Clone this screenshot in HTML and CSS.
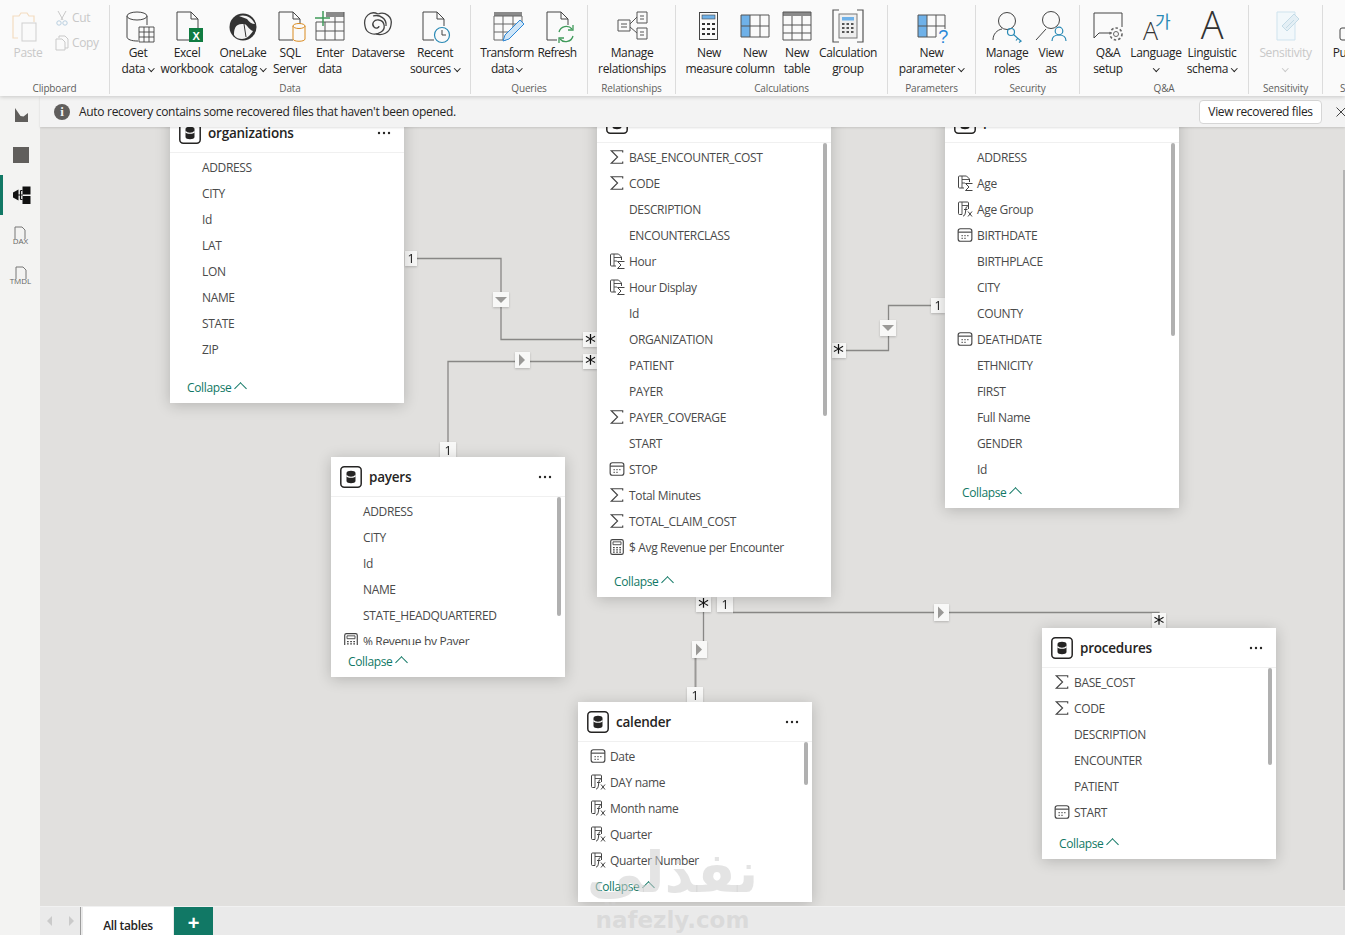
FILE: index.html
```html
<!DOCTYPE html>
<html lang="en">
<head>
    <meta charset="UTF-8">
    <title>Model view</title>
    <link rel="stylesheet" href="styles.css">
</head>
<body>
    <svg class="defs" width="0" height="0">
        <symbol id="i-sum" viewBox="0 0 14 14"><path d="M12 3V1.500H2L7.500 7 2 12.500h10V11" fill="none" stroke="#444" stroke-width="1"/></symbol>
        <symbol id="i-cal" viewBox="0 0 14 14"><rect x="1" y="1.500" width="12" height="11" rx="2" fill="none" stroke="#444"/><path d="M1 4.500h12" stroke="#444"/><path d="M4 7.500h1M6.500 7.500h1M9 7.500h1M4 10h1M6.500 10h1" stroke="#444"/></symbol>
        <symbol id="i-calc" viewBox="0 0 16 16"><path d="M7 13H2.500a1 1 0 0 1-1-1V2a1 1 0 0 1 1-1h7l3 3v3" fill="none" stroke="#444"/><path d="M5 1v12M5 4.500h7M5 8h3" stroke="#444" stroke-width=".9"/><path d="M15.500 8.500H8.500l3.500 3.500-3.500 3.500h7" fill="none" stroke="#444"/></symbol>
        <symbol id="i-fx" viewBox="0 0 16 16"><path d="M5 13.500H2.500a1 1 0 0 1-1-1V2a1 1 0 0 1 1-1h8a1 1 0 0 1 1 1v6" fill="none" stroke="#444"/><path d="M5 1v12.500M5 4.500h6" stroke="#444" stroke-width=".9"/><path d="M10.500 5.500C8.500 5.500 9 8 8.500 11s-1 4-2.500 4" fill="none" stroke="#444"/><path d="M7 8.500h3.500M11 10.500l4 5M15 10.500l-4 5" stroke="#444"/></symbol>
        <symbol id="i-meas" viewBox="0 0 14 14"><rect x="1.500" y=".5" width="11" height="13" rx="1.500" fill="none" stroke="#444"/><path d="M3.500 2.500h7v2.500h-7z" fill="none" stroke="#444" stroke-width=".8"/><path d="M3.500 7.500h1.500M6.300 7.500h1.500M9 7.500h1.500M3.500 9.500h1.500M6.300 9.500h1.500M9 9.500h1.500M3.500 11.500h1.500M6.300 11.500h1.500M9 11.500h1.500" stroke="#444"/></symbol>
        <symbol id="i-db" viewBox="0 0 22 22"><rect x=".8" y=".8" width="20.400" height="20.400" rx="3.500" fill="#fff" stroke="#252423" stroke-width="1.500"/><path d="M6.500 7c0-3 9-3 9 0v8c0 3-9 3-9 0z" fill="#252423"/><path d="M6.500 9.500c1 2.300 8 2.300 9 0" fill="none" stroke="#fff" stroke-width="1.200"/></symbol>
        <symbol id="i-more" viewBox="0 0 14 4"><circle cx="2" cy="2" r="1.200" fill="#252423"/><circle cx="7" cy="2" r="1.200" fill="#252423"/><circle cx="12" cy="2" r="1.200" fill="#252423"/></symbol>
    </svg>

    <div class="app">
        <header class="ribbon">
            <section class="group group-clipboard">
                <div class="group-btns">
                    <div class="btn w40 off">
                        <svg class="ico" viewBox="0 0 36 36"><path d="M8 30H3V8h6l2-3h6l2 3h5v6" fill="none" stroke="#f3dcc0" stroke-width="1.200"/><rect x="12" y="15" width="14" height="18" fill="#fafafa" stroke="#cfcfcf"/></svg>
                        <span class="btn-text">Paste</span>
                    </div>
                    <div class="clip-stack">
                        <div class="clip-item off">
                            <svg class="ico-small" viewBox="0 0 16 16"><path d="M4 1l5 9M12 1L7 10" fill="none" stroke="#c9c9c9"/><circle cx="5" cy="13" r="2.200" fill="none" stroke="#b9cfe0"/><circle cx="11" cy="13" r="2.200" fill="none" stroke="#b9cfe0"/></svg>
                            <span>Cut</span>
                        </div>
                        <div class="clip-item off">
                            <svg class="ico-small" viewBox="0 0 16 16"><path d="M5 3V1h6l3 3v9h-3" fill="none" stroke="#c9c9c9"/><path d="M2 4h6l3 3v8H2z" fill="none" stroke="#c9c9c9"/></svg>
                            <span>Copy</span>
                        </div>
                    </div>
                </div>
                <div class="group-name">Clipboard</div>
            </section>

            <section class="group group-data">
                <div class="group-btns">
                    <div class="btn w44">
                        <svg class="ico" viewBox="0 0 36 36"><path d="M7 8v21c0 2.500 5 4 10 4h1M27 8v9" fill="none" stroke="#444"/><ellipse cx="17" cy="8" rx="10" ry="4" fill="#fafafa" stroke="#444"/><path d="M19 19h15v15H19zM19 24h15M19 29h15M24 19v15M29 19v15" fill="#fafafa" stroke="#444" stroke-width=".9"/></svg>
                        <span class="btn-text">Get<br>data <i class="chev"></i></span>
                    </div>
                    <div class="btn w54">
                        <svg class="ico" viewBox="0 0 36 36"><path d="M8 32V4h14l7 7v9M22 4v7h7M8 32h12" fill="none" stroke="#444"/><rect x="20" y="20" width="14" height="14" fill="#107c41"/><text class="ico-x" x="27" y="31.500">X</text></svg>
                        <span class="btn-text">Excel<br>workbook</span>
                    </div>
                    <div class="btn w58">
                        <svg class="ico" viewBox="0 0 36 36"><circle cx="18" cy="19" r="13.500" fill="#333"/><path d="M9 27c0-6 1-12 10-11 3 0 4 5 9 7-3 5-7 8-11 8-3 0-6-1-8-4z" fill="#f4f4f4"/><path d="M14 8c6-2 13 1 16 8-3 0-6-2-8-5z" fill="#f4f4f4"/><path d="M19 16l2 13" stroke="#333"/></svg>
                        <span class="btn-text">OneLake<br>catalog <i class="chev"></i></span>
                    </div>
                    <div class="btn w36">
                        <svg class="ico" viewBox="0 0 36 36"><path d="M7 32V4h14l7 7v5M21 4v7h7M7 32h14" fill="none" stroke="#444"/><path d="M21 18v13c0 3 12 3 12 0V18" fill="#fafafa" stroke="#d98a1f"/><ellipse cx="27" cy="18" rx="6" ry="2.500" fill="#fafafa" stroke="#d98a1f"/></svg>
                        <span class="btn-text">SQL<br>Server</span>
                    </div>
                    <div class="btn w44">
                        <svg class="ico" viewBox="0 0 36 36"><rect x="14" y="4" width="18" height="5" fill="#8a8a8a"/><path d="M4 14v18h28V4M4 23h28M4 14h28M13 14v18M23 9v23" fill="none" stroke="#555"/><path d="M11 3v15M3 10h15" stroke="#3f9a5a" stroke-width="1.500"/></svg>
                        <span class="btn-text">Enter<br>data</span>
                    </div>
                    <div class="btn w52">
                        <svg class="ico" viewBox="0 0 36 36"><path d="M18 6C10 2 3 9 5 18c1 8 10 10 16 6 5-3 4-11-2-12-5-1-8 4-5 7 2 2 5 1 5-1" fill="none" stroke="#444" stroke-width="1.300"/><path d="M18 6c7-3 15 3 13 11-1 8-9 11-15 9" fill="none" stroke="#444" stroke-width="1.300"/><path d="M13 8C20 6 27 11 26 18" fill="none" stroke="#444" stroke-width="1.300"/></svg>
                        <span class="btn-text">Dataverse</span>
                    </div>
                    <div class="btn w62">
                        <svg class="ico" viewBox="0 0 36 36"><path d="M6 32V4h14l7 7v7M20 4v7h7M6 32h11" fill="none" stroke="#444"/><circle cx="25" cy="27" r="7.500" fill="#fafafa" stroke="#2a8ab5" stroke-width="1.200"/><path d="M25 22v5h4" fill="none" stroke="#444"/></svg>
                        <span class="btn-text">Recent<br>sources <i class="chev"></i></span>
                    </div>
                </div>
                <div class="group-name">Data</div>
            </section>

            <section class="group group-queries">
                <div class="group-btns">
                    <div class="btn w56">
                        <svg class="ico" viewBox="0 0 36 36"><rect x="5" y="4" width="28" height="4" fill="#8a8a8a"/><path d="M5 8h28v10M5 8v24h12M5 16h24M5 24h18M14 8v24M24 8v14" fill="none" stroke="#666"/><path d="M14 33l2-6 15-15 4 4-15 15z" fill="#cfe5f7" stroke="#2b88d8"/></svg>
                        <span class="btn-text tight">Transform<br>data <i class="chev"></i></span>
                    </div>
                    <div class="btn w44">
                        <svg class="ico" viewBox="0 0 36 36"><path d="M8 32V4h14l7 7v6M22 4v7h7M8 32h10" fill="none" stroke="#444"/><path d="M20 24a7.500 7.500 0 0 1 13-3M34 28a7.500 7.500 0 0 1-13 3" fill="none" stroke="#3f9a5a" stroke-width="1.300"/><path d="M34 17v5h-5M20 35v-5h5" fill="none" stroke="#3f9a5a" stroke-width="1.300"/></svg>
                        <span class="btn-text tight">Refresh</span>
                    </div>
                </div>
                <div class="group-name">Queries</div>
            </section>

            <section class="group group-rel">
                <div class="group-btns">
                    <div class="btn w88">
                        <svg class="ico" viewBox="0 0 36 36"><path d="M4 12h12v11H4zM23 4h10v11H23zM23 20h10v11H23zM7 16h6M7 19h6M26 8h4M26 11h4M26 24h4M26 27h4" fill="none" stroke="#555"/><path d="M23 9l-7 7M16 19l7 6" stroke="#555"/></svg>
                        <span class="btn-text">Manage<br>relationships</span>
                    </div>
                </div>
                <div class="group-name">Relationships</div>
            </section>

            <section class="group group-calc">
                <div class="group-btns">
                    <div class="btn w50">
                        <svg class="ico" viewBox="0 0 36 36"><rect x="8.500" y="4.500" width="18" height="27" fill="#fafafa" stroke="#444"/><rect x="11" y="7" width="13" height="4" fill="#6fb1e8" stroke="#444" stroke-width=".6"/><path d="M11 16h3M16 16h3M21 16h3M11 21h3M16 21h3M21 21h3M11 26h3M16 26h3M21 26h3" stroke="#333" stroke-width="2"/></svg>
                        <span class="btn-text">New<br>measure</span>
                    </div>
                    <div class="btn w42">
                        <svg class="ico" viewBox="0 0 36 36"><rect x="4" y="7" width="9" height="22" fill="#6fb1e8"/><path d="M4 7h28v22H4zM4 18h28M13 7v22M23 7v22" fill="none" stroke="#555"/></svg>
                        <span class="btn-text">New<br>column</span>
                    </div>
                    <div class="btn w42">
                        <svg class="ico" viewBox="0 0 36 36"><rect x="4" y="4" width="28" height="4" fill="#8a8a8a"/><path d="M4 4h28v28H4zM4 17h28M4 25h28M13 8v24M23 8v24" fill="none" stroke="#555"/></svg>
                        <span class="btn-text">New<br>table</span>
                    </div>
                    <div class="btn w60">
                        <svg class="ico" viewBox="0 0 36 36"><path d="M9 2H3v32h6M27 2h6v32h-6" fill="none" stroke="#555" stroke-width="1.200"/><rect x="9" y="6" width="18" height="24" fill="#eee" stroke="#777"/><rect x="12" y="9" width="12" height="3.500" fill="#6fb1e8"/><path d="M12 16h2.500M16.500 16h2.500M21 16h2.500M12 20h2.500M16.500 20h2.500M21 20h2.500M12 24h2.500M16.500 24h2.500M21 24h2.500" stroke="#555" stroke-width="2"/></svg>
                        <span class="btn-text">Calculation<br>group</span>
                    </div>
                </div>
                <div class="group-name">Calculations</div>
            </section>

            <section class="group group-param">
                <div class="group-btns">
                    <div class="btn w87">
                        <svg class="ico" viewBox="0 0 36 36"><rect x="4" y="7" width="9" height="22" fill="#6fb1e8"/><path d="M4 7h27v14M4 7v22h18M4 18h27M13 7v22M22 7v22" fill="none" stroke="#555"/><text class="ico-q" x="29" y="35">?</text></svg>
                        <span class="btn-text">New<br>parameter <i class="chev"></i></span>
                    </div>
                </div>
                <div class="group-name">Parameters</div>
            </section>

            <section class="group group-sec">
                <div class="group-btns">
                    <div class="btn w46">
                        <svg class="ico" viewBox="0 0 36 36"><circle cx="18" cy="13" r="8.500" fill="none" stroke="#444"/><path d="M4 32c0-6 4-10 9-11" fill="none" stroke="#444"/><circle cx="22" cy="24" r="3.500" fill="none" stroke="#2a8ab5" stroke-width="1.200"/><path d="M24.500 26.500l8 7M29 30l-2 2.500M32 33l-2 1.500" fill="none" stroke="#2a8ab5" stroke-width="1.200"/></svg>
                        <span class="btn-text">Manage<br>roles</span>
                    </div>
                    <div class="btn w42">
                        <svg class="ico" viewBox="0 0 36 36"><circle cx="18" cy="12" r="8.500" fill="none" stroke="#444"/><path d="M13 21L3 32" fill="none" stroke="#444"/><circle cx="26" cy="23" r="3.800" fill="none" stroke="#2a8ab5" stroke-width="1.200"/><path d="M19 33c0-4 3-6 7-6s7 2 7 6" fill="none" stroke="#2a8ab5" stroke-width="1.200"/></svg>
                        <span class="btn-text">View<br>as</span>
                    </div>
                </div>
                <div class="group-name">Security</div>
            </section>

            <section class="group group-qa">
                <div class="group-btns">
                    <div class="btn w44">
                        <svg class="ico" viewBox="0 0 36 36"><path d="M22 25H9l-5 5V5h28v14" fill="none" stroke="#444"/><circle cx="26" cy="26" r="2.500" fill="none" stroke="#666"/><circle cx="26" cy="26" r="6" fill="none" stroke="#666" stroke-dasharray="2.500 2" stroke-width="1.600"/></svg>
                        <span class="btn-text">Q&amp;A<br>setup</span>
                    </div>
                    <div class="btn w52">
                        <svg class="ico" viewBox="0 0 36 36"><text class="ico-lang-a" x="5" y="32">A</text><text class="ico-lang-k" x="17" y="20">가</text></svg>
                        <span class="btn-text">Language<br><i class="chev"></i></span>
                    </div>
                    <div class="btn w60">
                        <svg class="ico" viewBox="0 0 36 36"><text class="ico-big-a" x="18" y="31">A</text></svg>
                        <span class="btn-text">Linguistic<br>schema <i class="chev"></i></span>
                    </div>
                </div>
                <div class="group-name">Q&amp;A</div>
            </section>

            <section class="group group-sens">
                <div class="group-btns">
                    <div class="btn w73 off">
                        <svg class="ico" viewBox="0 0 36 36"><path d="M9 4h18v28H9z" fill="#f2f8fb" stroke="#cfe3ee"/><path d="M14 18L26 6l5 5-12 12zM18 20l8-8" fill="#e4eff5" stroke="#c4dbe6"/></svg>
                        <span class="btn-text">Sensitivity<br><i class="chev"></i></span>
                    </div>
                </div>
                <div class="group-name">Sensitivity</div>
            </section>

            <section class="group group-share">
                <div class="group-btns">
                    <div class="btn w40">
                        <svg class="ico" viewBox="0 0 36 36"><rect x="6" y="20" width="20" height="12" rx="2" fill="none" stroke="#444"/></svg>
                        <span class="btn-text">Publish</span>
                    </div>
                </div>
                <div class="group-name">Share</div>
            </section>
        </header>

        <div class="workspace">
            <nav class="sidebar">
                <div class="side-item">
                    <svg class="side-ico" viewBox="0 0 20 20"><path d="M4 3l5.500 8 3 .5L17 8v9H4z" fill="#605e5c"/></svg>
                </div>
                <div class="side-item">
                    <svg class="side-ico" viewBox="0 0 20 20"><rect x="2" y="2" width="16" height="16" fill="#605e5c"/></svg>
                </div>
                <div class="side-item active">
                    <svg class="side-ico" viewBox="0 0 20 20"><path d="M10.500 1.500h8v8h-8zM10.500 11h8v8h-8z" fill="#111"/><path d="M1 7.500l5.500-3v11L1 12.500z" fill="#111"/><path d="M6 10h5M8.500 5.500h2M8.500 14.500h2M8.500 5.500v9" stroke="#111" stroke-width="1.200"/></svg>
                </div>
                <div class="side-item">
                    <div class="side-file">
                        <svg class="file-ico" viewBox="0 0 14 14"><path d="M2 13V1h7l3 3v9" fill="none" stroke="#777"/></svg>
                        <span>DAX</span>
                    </div>
                </div>
                <div class="side-item">
                    <div class="side-file">
                        <svg class="file-ico" viewBox="0 0 14 14"><path d="M2 13V1h7l3 3v9" fill="none" stroke="#777"/></svg>
                        <span>TMDL</span>
                    </div>
                </div>
            </nav>

            <div class="main">
                <div class="notice">
                    <span class="notice-info">i</span>
                    <span class="notice-text">Auto recovery contains some recovered files that haven't been opened.</span>
                    <button class="notice-btn">View recovered files</button>
                    <svg class="notice-x" viewBox="0 0 10 10"><path d="M.5.5l9 9M9.500.5l-9 9" stroke="#444"/></svg>
                </div>

                <div class="canvas">
                    <svg class="links" viewBox="40 127 1305 779" width="1305" height="779">
                        <path class="link" d="M417 258.500H501V339.500H583"/>
                        <path class="link" d="M448 442V361.500H583"/>
                        <path class="link" d="M846 350.500H888.500V305.500H931"/>
                        <path class="link" d="M703.500 612V641"/>
                        <path class="link thick" d="M695.500 658V687"/>
                        <path class="link" d="M733 612.500H1159V613"/>

                        <g class="mark"><rect x="405" y="251" width="12" height="15"/><text x="411" y="263">1</text></g>
                        <g class="mark"><rect x="440" y="442" width="16" height="15"/><text x="448" y="455">1</text></g>
                        <g class="mark"><rect x="931" y="298" width="14" height="15"/><text x="938" y="310">1</text></g>
                        <g class="mark"><rect x="687" y="687" width="16" height="15"/><text x="695" y="700">1</text></g>
                        <g class="mark"><rect x="717" y="597" width="16" height="15"/><text x="725" y="609">1</text></g>

                        <g class="mark"><rect x="583" y="332" width="14" height="15"/><text class="star" x="590.500" y="349.500">*</text></g>
                        <g class="mark"><rect x="583" y="354" width="14" height="15"/><text class="star" x="590.500" y="371">*</text></g>
                        <g class="mark"><rect x="832" y="343" width="14" height="15"/><text class="star" x="838.500" y="360">*</text></g>
                        <g class="mark"><rect x="696" y="597" width="15" height="15"/><text class="star" x="703.500" y="614">*</text></g>
                        <g class="mark"><rect x="1152" y="613" width="14" height="15"/><text class="star" x="1159" y="631">*</text></g>

                        <g class="mark"><rect x="493" y="292" width="16" height="15"/><path class="tri" d="M495 297h12l-6 6z"/></g>
                        <g class="mark"><rect x="880" y="320" width="16" height="16"/><path class="tri" d="M882 325h12l-6 6z"/></g>
                        <g class="mark"><rect x="515" y="352" width="15" height="16"/><path class="tri" d="M519 354v12l6-6z"/></g>
                        <g class="mark"><rect x="692" y="641" width="15" height="17"/><path class="tri" d="M696 643.500v12l6-6z"/></g>
                        <g class="mark"><rect x="934" y="604" width="15" height="17"/><path class="tri" d="M938 606.500v12l6-6z"/></g>
                    </svg>

                    <div class="card card-org">
                        <div class="card-head">
                            <svg class="card-ico"><use href="#i-db"/></svg>
                            <span class="card-title">organizations</span>
                            <svg class="card-more"><use href="#i-more"/></svg>
                        </div>
                        <div class="card-body">
                            <div class="field"><span>ADDRESS</span></div>
                            <div class="field"><span>CITY</span></div>
                            <div class="field"><span>Id</span></div>
                            <div class="field"><span>LAT</span></div>
                            <div class="field"><span>LON</span></div>
                            <div class="field"><span>NAME</span></div>
                            <div class="field"><span>STATE</span></div>
                            <div class="field"><span>ZIP</span></div>
                        </div>
                        <div class="card-foot">Collapse <i class="chev-up"></i></div>
                    </div>

                    <div class="card card-enc">
                        <div class="card-head">
                            <svg class="card-ico"><use href="#i-db"/></svg>
                            <span class="card-title">encounters</span>
                            <svg class="card-more"><use href="#i-more"/></svg>
                        </div>
                        <div class="card-body">
                            <div class="field"><svg class="fi"><use href="#i-sum"/></svg><span>BASE_ENCOUNTER_COST</span></div>
                            <div class="field"><svg class="fi"><use href="#i-sum"/></svg><span>CODE</span></div>
                            <div class="field"><span>DESCRIPTION</span></div>
                            <div class="field"><span>ENCOUNTERCLASS</span></div>
                            <div class="field"><svg class="fi"><use href="#i-calc"/></svg><span>Hour</span></div>
                            <div class="field"><svg class="fi"><use href="#i-calc"/></svg><span>Hour Display</span></div>
                            <div class="field"><span>Id</span></div>
                            <div class="field"><span>ORGANIZATION</span></div>
                            <div class="field"><span>PATIENT</span></div>
                            <div class="field"><span>PAYER</span></div>
                            <div class="field"><svg class="fi"><use href="#i-sum"/></svg><span>PAYER_COVERAGE</span></div>
                            <div class="field"><span>START</span></div>
                            <div class="field"><svg class="fi"><use href="#i-cal"/></svg><span>STOP</span></div>
                            <div class="field"><svg class="fi"><use href="#i-sum"/></svg><span>Total Minutes</span></div>
                            <div class="field"><svg class="fi"><use href="#i-sum"/></svg><span>TOTAL_CLAIM_COST</span></div>
                            <div class="field"><svg class="fi"><use href="#i-meas"/></svg><span>$ Avg Revenue per Encounter</span></div>
                        </div>
                        <div class="card-foot">Collapse <i class="chev-up"></i></div>
                        <div class="thumb"></div>
                    </div>

                    <div class="card card-pat">
                        <div class="card-head">
                            <svg class="card-ico"><use href="#i-db"/></svg>
                            <span class="card-title">patients</span>
                            <svg class="card-more"><use href="#i-more"/></svg>
                        </div>
                        <div class="card-body">
                            <div class="field"><span>ADDRESS</span></div>
                            <div class="field"><svg class="fi"><use href="#i-calc"/></svg><span>Age</span></div>
                            <div class="field"><svg class="fi"><use href="#i-fx"/></svg><span>Age Group</span></div>
                            <div class="field"><svg class="fi"><use href="#i-cal"/></svg><span>BIRTHDATE</span></div>
                            <div class="field"><span>BIRTHPLACE</span></div>
                            <div class="field"><span>CITY</span></div>
                            <div class="field"><span>COUNTY</span></div>
                            <div class="field"><svg class="fi"><use href="#i-cal"/></svg><span>DEATHDATE</span></div>
                            <div class="field"><span>ETHNICITY</span></div>
                            <div class="field"><span>FIRST</span></div>
                            <div class="field"><span>Full Name</span></div>
                            <div class="field"><span>GENDER</span></div>
                            <div class="field"><span>Id</span></div>
                        </div>
                        <div class="card-foot">Collapse <i class="chev-up"></i></div>
                        <div class="thumb"></div>
                    </div>

                    <div class="card card-pay">
                        <div class="card-head">
                            <svg class="card-ico"><use href="#i-db"/></svg>
                            <span class="card-title">payers</span>
                            <svg class="card-more"><use href="#i-more"/></svg>
                        </div>
                        <div class="card-body">
                            <div class="field"><span>ADDRESS</span></div>
                            <div class="field"><span>CITY</span></div>
                            <div class="field"><span>Id</span></div>
                            <div class="field"><span>NAME</span></div>
                            <div class="field"><span>STATE_HEADQUARTERED</span></div>
                            <div class="field"><svg class="fi"><use href="#i-meas"/></svg><span>% Revenue by Payer</span></div>
                        </div>
                        <div class="card-foot">Collapse <i class="chev-up"></i></div>
                        <div class="thumb"></div>
                    </div>

                    <div class="card card-cal">
                        <div class="card-head">
                            <svg class="card-ico"><use href="#i-db"/></svg>
                            <span class="card-title">calender</span>
                            <svg class="card-more"><use href="#i-more"/></svg>
                        </div>
                        <div class="card-body">
                            <div class="field"><svg class="fi"><use href="#i-cal"/></svg><span>Date</span></div>
                            <div class="field"><svg class="fi"><use href="#i-fx"/></svg><span>DAY name</span></div>
                            <div class="field"><svg class="fi"><use href="#i-fx"/></svg><span>Month name</span></div>
                            <div class="field"><svg class="fi"><use href="#i-fx"/></svg><span>Quarter</span></div>
                            <div class="field"><svg class="fi"><use href="#i-fx"/></svg><span>Quarter Number</span></div>
                        </div>
                        <div class="card-foot">Collapse <i class="chev-up"></i></div>
                        <div class="thumb"></div>
                    </div>

                    <div class="card card-pro">
                        <div class="card-head">
                            <svg class="card-ico"><use href="#i-db"/></svg>
                            <span class="card-title">procedures</span>
                            <svg class="card-more"><use href="#i-more"/></svg>
                        </div>
                        <div class="card-body">
                            <div class="field"><svg class="fi"><use href="#i-sum"/></svg><span>BASE_COST</span></div>
                            <div class="field"><svg class="fi"><use href="#i-sum"/></svg><span>CODE</span></div>
                            <div class="field"><span>DESCRIPTION</span></div>
                            <div class="field"><span>ENCOUNTER</span></div>
                            <div class="field"><span>PATIENT</span></div>
                            <div class="field"><svg class="fi"><use href="#i-cal"/></svg><span>START</span></div>
                        </div>
                        <div class="card-foot">Collapse <i class="chev-up"></i></div>
                        <div class="thumb"></div>
                    </div>

                    <div class="page-scroll"></div>
                </div>

                <div class="tabs">
                    <div class="tab-arrows">
                        <i class="tab-prev"></i>
                        <i class="tab-next"></i>
                    </div>
                    <div class="tab">All tables</div>
                    <div class="tab-add">+</div>
                </div>
            </div>
        </div>

        <div class="watermark">
            <div class="wm-ar" lang="ar" dir="rtl">نفذلي</div>
            <div class="wm-en">nafezly.com</div>
        </div>
    </div>
</body>
</html>
```

FILE: styles.css
```css
* {
    box-sizing: border-box;
}

html, body {
    margin: 0;
    height: 100%;
    overflow: hidden;
}

body {
    font-family: "Open Sans", "Noto Sans", sans-serif;
    font-size: 12px;
    letter-spacing: -0.35px;
    color: #252423;
    background-color: #f3f3f2;
}

.defs {
    display: block;
    height: 0;
}

.app {
    position: relative;
    display: flex;
    flex-direction: column;
    height: 100vh;
    overflow: hidden;
}

/* ribbon */
.ribbon {
    position: relative;
    z-index: 3;
    display: flex;
    flex: none;
    height: 96px;
    padding-top: 5px;
    background-color: #fafafa;
    box-shadow: 0 1px 4px rgba(0, 0, 0, 0.18);
}

.group {
    display: flex;
    flex: none;
    flex-direction: column;
    height: 89px;
    border-right: 1px solid #dcdcdc;
}

.group-btns {
    display: flex;
    flex: 1;
    padding-top: 3px;
}

.group-name {
    flex: none;
    height: 11px;
    font-size: 10px;
    line-height: 11px;
    text-align: center;
    color: #605e5c;
    letter-spacing: -0.15px;
}

.group-clipboard { width: 110px; }
.group-clipboard .group-btns { padding-left: 8px; }
.group-data { width: 361px; }
.group-data .group-btns { padding-left: 6px; }
.group-queries { width: 117px; }
.group-queries .group-btns { padding-left: 8px; }
.group-rel { width: 88px; }
.group-calc { width: 212px; }
.group-calc .group-btns { padding-left: 8px; }
.group-param { width: 88px; }
.group-sec { width: 104px; }
.group-sec .group-btns { padding-left: 8px; }
.group-qa { width: 169px; }
.group-qa .group-btns { padding-left: 6px; }
.group-sens { width: 74px; }
.group-share { width: 60px; border-right: none; }
.group-share .group-btns { padding-left: 9px; }

.btn {
    display: flex;
    flex: none;
    flex-direction: column;
    align-items: center;
    text-align: center;
}

.w36 { width: 36px; }
.w40 { width: 40px; }
.w42 { width: 42px; }
.w44 { width: 44px; }
.w46 { width: 46px; }
.w50 { width: 50px; }
.w52 { width: 52px; }
.w54 { width: 54px; }
.w56 { width: 56px; }
.w58 { width: 58px; }
.w60 { width: 60px; }
.w62 { width: 62px; }
.w73 { width: 73px; }
.w87 { width: 87px; }
.w88 { width: 88px; }

.ico {
    flex: none;
    width: 36px;
    height: 36px;
    margin-bottom: 1px;
    overflow: visible;
}

.btn-text {
    white-space: nowrap;
    line-height: 16px;
}

.tight {
    letter-spacing: -0.55px;
}

.off {
    color: #c8c8c8;
}

.chev {
    display: inline-block;
    width: 4.500px;
    height: 4.500px;
    margin: 0 1px 3px 1px;
    border-right: 1px solid #252423;
    border-bottom: 1px solid #252423;
    transform: rotate(45deg);
}

.off .chev {
    border-color: #c8c8c8;
}

.clip-stack {
    display: flex;
    flex-direction: column;
    gap: 8px;
    margin-left: 6px;
    padding-top: 1px;
}

.clip-item {
    display: flex;
    align-items: center;
    gap: 2px;
    height: 17px;
}

.ico-small {
    width: 16px;
    height: 16px;
}

.ico-x {
    font-family: "Liberation Sans", sans-serif;
    font-size: 11px;
    font-weight: 700;
    fill: #fff;
    text-anchor: middle;
}

.ico-q {
    font-family: "Liberation Sans", sans-serif;
    font-size: 18px;
    fill: #2b88d8;
    text-anchor: middle;
}

.ico-lang-a {
    font-family: "Open Sans", sans-serif;
    font-size: 25px;
    font-weight: 300;
    fill: #333;
}

.ico-lang-k {
    font-family: "Noto Sans CJK KR", sans-serif;
    font-size: 17px;
    fill: #2a8ab5;
}

.ico-big-a {
    font-family: "Open Sans", sans-serif;
    font-size: 38px;
    font-weight: 300;
    fill: #333;
    text-anchor: middle;
}

/* below the ribbon */
.workspace {
    display: flex;
    flex: 1;
    min-height: 0;
}

.sidebar {
    display: flex;
    flex: none;
    flex-direction: column;
    width: 40px;
    margin-top: -1px;
    background-color: #f3f3f2;
}

.side-item {
    display: flex;
    align-items: center;
    justify-content: center;
    height: 40px;
    padding-left: 1px;
}

.side-item.active {
    padding-left: 0;
    border-left: 3px solid #117865;
}

.side-ico {
    width: 20px;
    height: 20px;
}

.side-file {
    display: flex;
    flex-direction: column;
    align-items: center;
    font-size: 8px;
    line-height: 8px;
    color: #666;
    letter-spacing: 0;
}

.file-ico {
    width: 14px;
    height: 14px;
    margin-bottom: -3px;
}

.main {
    display: flex;
    flex: 1;
    flex-direction: column;
    min-width: 0;
}

.notice {
    position: relative;
    z-index: 2;
    display: flex;
    flex: none;
    align-items: center;
    height: 31px;
    padding-left: 14px;
    letter-spacing: -0.3px;
    background-color: #f3f3f3;
    box-shadow: 0 1px 2px rgba(0, 0, 0, 0.12);
}

.notice-info {
    width: 16px;
    height: 16px;
    margin-right: 9px;
    border-radius: 50%;
    font-family: "Liberation Serif", serif;
    font-size: 13px;
    font-weight: 700;
    line-height: 16px;
    text-align: center;
    color: #f3f3f3;
    background-color: #605e5c;
}

.notice-text {
    flex: 1;
}

.notice-btn {
    width: 123px;
    height: 24px;
    margin-right: 14px;
    padding: 0;
    border: 1px solid #d6d6d6;
    border-radius: 4px;
    font: inherit;
    letter-spacing: -0.35px;
    color: #252423;
    background-color: #fff;
}

.notice-x {
    flex: none;
    width: 10px;
    height: 10px;
    margin-right: -1px;
}

.canvas {
    position: relative;
    flex: 1;
    overflow: hidden;
    background-color: #e1e0de;
}

.links {
    position: absolute;
    top: 0;
    left: 0;
}

.link {
    fill: none;
    stroke: #888785;
    stroke-width: 1.300;
}

.link.thick {
    stroke: #9a9997;
    stroke-width: 2;
}

.mark {
    filter: drop-shadow(0 1px 1px rgba(0, 0, 0, 0.2));
}

.mark rect {
    fill: #f8f8f7;
}

.mark text {
    font-size: 12.500px;
    fill: #111;
    text-anchor: middle;
    letter-spacing: 0;
}

.mark .star {
    font-family: "DejaVu Sans", sans-serif;
    font-size: 22px;
    fill: #111;
}

.tri {
    fill: #9a9997;
}

/* tables on the diagram */
.card {
    position: absolute;
    display: flex;
    flex-direction: column;
    width: 234px;
    background-color: #fff;
    box-shadow: 0 2px 14px rgba(0, 0, 0, 0.2);
}

.card-org { left: 130px; top: -14px; height: 290px; }
.card-enc { left: 557px; top: -24px; height: 494px; }
.card-pat { left: 905px; top: -24px; height: 405px; }
.card-pay { left: 291px; top: 330px; height: 220px; }
.card-cal { left: 538px; top: 575px; height: 200px; }
.card-pro { left: 1002px; top: 501px; height: 231px; }

.card-head {
    display: flex;
    flex: none;
    align-items: center;
    height: 40px;
    padding: 0 13px 0 9px;
    border-bottom: 1px solid #f0f0f0;
}

.card-ico {
    flex: none;
    width: 22px;
    height: 22px;
}

.card-title {
    flex: 1;
    margin-left: 7px;
    font-size: 13.500px;
    font-weight: 600;
    letter-spacing: -0.22px;
}

/* the two cards cut by the notice bar show little of their title */
.card-enc .card-title,
.card-pat .card-title {
    margin-bottom: 4px;
}

.card-more {
    flex: none;
    width: 14px;
    height: 4px;
}

.card-body {
    flex: 1;
    min-height: 0;
    margin-top: 1px;
    overflow: hidden;
}

.field {
    display: flex;
    align-items: center;
    height: 26px;
    padding-left: 32px;
    white-space: nowrap;
    color: #4a4a4a;
}

.fi {
    flex: none;
    width: 16px;
    height: 16px;
    margin-left: -20px;
    margin-right: 4px;
}

.card-foot {
    flex: none;
    height: 32px;
    padding-left: 17px;
    line-height: 34px;
    color: #117865;
}

.chev-up {
    display: inline-block;
    width: 9px;
    height: 9px;
    margin: 0 0 -1px 2px;
    border-top: 1px solid #117865;
    border-left: 1px solid #117865;
    transform: rotate(45deg);
}

.thumb {
    position: absolute;
    top: 40px;
    right: 4px;
    width: 4px;
    border-radius: 2px;
    background-color: #b0b0b0;
}

.card-enc .thumb { height: 273px; }
.card-pat .thumb { height: 193px; }
.card-pay .thumb { height: 119px; }
.card-cal .thumb { height: 43px; }
.card-pro .thumb { height: 97px; }

.page-scroll {
    position: absolute;
    top: 43px;
    right: 0;
    bottom: 16px;
    width: 2px;
    background-color: #b4b4b4;
}

/* bottom tabs */
.tabs {
    display: flex;
    flex: none;
    height: 29px;
    border-top: 1px solid #f1f1f1;
    background-color: #eaeaea;
}

.tab-arrows {
    display: flex;
    flex: none;
    align-items: center;
    justify-content: space-between;
    width: 41px;
    padding: 0 6px 0 7px;
    border-right: 1px solid #9c9c9c;
}

.tab-prev {
    border-top: 5px solid transparent;
    border-bottom: 5px solid transparent;
    border-right: 5px solid #cacaca;
}

.tab-next {
    border-top: 5px solid transparent;
    border-bottom: 5px solid transparent;
    border-left: 5px solid #cacaca;
}

.tab {
    width: 90px;
    margin-left: 2px;
    line-height: 37px;
    font-weight: 600;
    text-align: center;
    background-color: #fff;
}

.tab-add {
    width: 39px;
    margin-left: 1px;
    font-family: "Liberation Sans", sans-serif;
    font-size: 20px;
    font-weight: 700;
    line-height: 33px;
    text-align: center;
    color: #fff;
    background-color: #117865;
}

/* watermark sits over everything */
.watermark {
    position: absolute;
    top: 841px;
    left: 585px;
    z-index: 5;
    width: 175px;
    pointer-events: none;
    text-align: center;
    color: rgba(205, 205, 205, 0.55);
    font-family: "DejaVu Sans", sans-serif;
    font-weight: 700;
    letter-spacing: 0;
}

.wm-ar {
    font-size: 56px;
    line-height: 64px;
}

.wm-en {
    margin-top: 1px;
    font-size: 23px;
    line-height: 28px;
}
```
